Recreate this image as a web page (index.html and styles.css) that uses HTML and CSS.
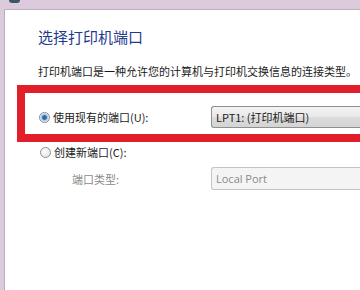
FILE: index.html
```html
<!DOCTYPE html>
<html lang="zh-CN">
<head>
    <meta charset="UTF-8">
    <meta name="viewport" content="width=device-width, initial-scale=1.0">
    <title>添加打印机</title>
    <link rel="stylesheet" href="styles.css">
</head>
<body>
    <div class="frame-top">
        <div class="app-icon"></div>
    </div>
    <div class="panel">
        <h2 class="title">选择打印机端口</h2>
        <p class="desc">打印机端口是一种允许您的计算机与打印机交换信息的连接类型。</p>

        <div class="highlight">
            <div class="row">
                <label class="option">
                    <span class="radio checked"></span>
                    <span>使用现有的端口(U):</span>
                </label>
                <div class="combo">LPT1: (打印机端口)</div>
            </div>
        </div>

        <div class="row row-new">
            <label class="option">
                <span class="radio"></span>
                <span>创建新端口(C):</span>
            </label>
        </div>

        <div class="row row-type">
            <span class="sub-label">端口类型:</span>
            <div class="combo disabled">Local Port</div>
        </div>
    </div>
</body>
</html>
```

FILE: styles.css
```css
html, body {
    margin: 0;
    height: 290px;
    overflow: hidden;
}
body {
    background: #dccbdc;
    font-family: "Noto Sans CJK SC", sans-serif;
    color: #1a1a1a;
}
.frame-top {
    height: 9px;
}
.app-icon {
    width: 11px;
    height: 3px;
    margin-left: 9px;
    border-radius: 0 0 6px 6px;
    background: #3d5666;
}
/* the dialog runs on past the right edge of the shot */
.panel {
    margin-left: 4px;
    height: 281px;
    background: #fff;
    border-top: 1px solid #bdb3c0;
    border-left: 1px solid #b8aebb;
}
.title {
    margin: 17px 0 0 33px;
    font-size: 15px;
    line-height: 20px;
    font-weight: normal;
    color: #1f3a8f;
}
.desc {
    margin: 16px 0 0 33px;
    font-size: 11px;
    line-height: 16px;
    white-space: nowrap;
}
.highlight {
    margin: 6px 0 0 12px;
    height: 41px;
    border: 8px solid #e31e2b;
    border-right: none;
}
.highlight .row {
    margin-top: 13px;
    padding-left: 14px;
}
.row {
    display: flex;
    align-items: center;
    height: 22px;
    font-size: 11px;
}
.option {
    display: flex;
    align-items: center;
    gap: 3px;
    width: 172px;
    flex-shrink: 0;
}
.radio {
    width: 9px;
    height: 9px;
    border: 1px solid #8f8f8f;
    border-radius: 50%;
    background: radial-gradient(circle at 40% 35%, #ffffff, #dedede);
}
.radio.checked {
    border-color: #7b8b9b;
    background: radial-gradient(circle, #2f5f8c 0, #3f76a8 2px, #a8c6e0 3px, #eef3f8 4.5px);
}
.combo {
    flex: 1;
    height: 20px;
    line-height: 20px;
    padding-left: 4px;
    border: 1px solid #8d8f91;
    border-right: none;
    border-radius: 3px 0 0 3px;
    background: linear-gradient(#f3f3f3, #e8e8e8 50%, #dcdcdc 51%, #d4d4d4);
    white-space: nowrap;
}
.row-new {
    margin-top: 2px;
    height: 16px;
    padding-left: 35px;
}
.row-type {
    margin-top: 7px;
    height: 23px;
}
.sub-label {
    width: 139px;
    padding-left: 67px;
    flex-shrink: 0;
    color: #8a8a8a;
}
.combo.disabled {
    height: 21px;
    line-height: 21px;
    border-color: #c4c4c4;
    background: #f4f4f4;
    color: #8a8a8a;
    font-family: "Open Sans", sans-serif;
    font-size: 11px;
}
```
